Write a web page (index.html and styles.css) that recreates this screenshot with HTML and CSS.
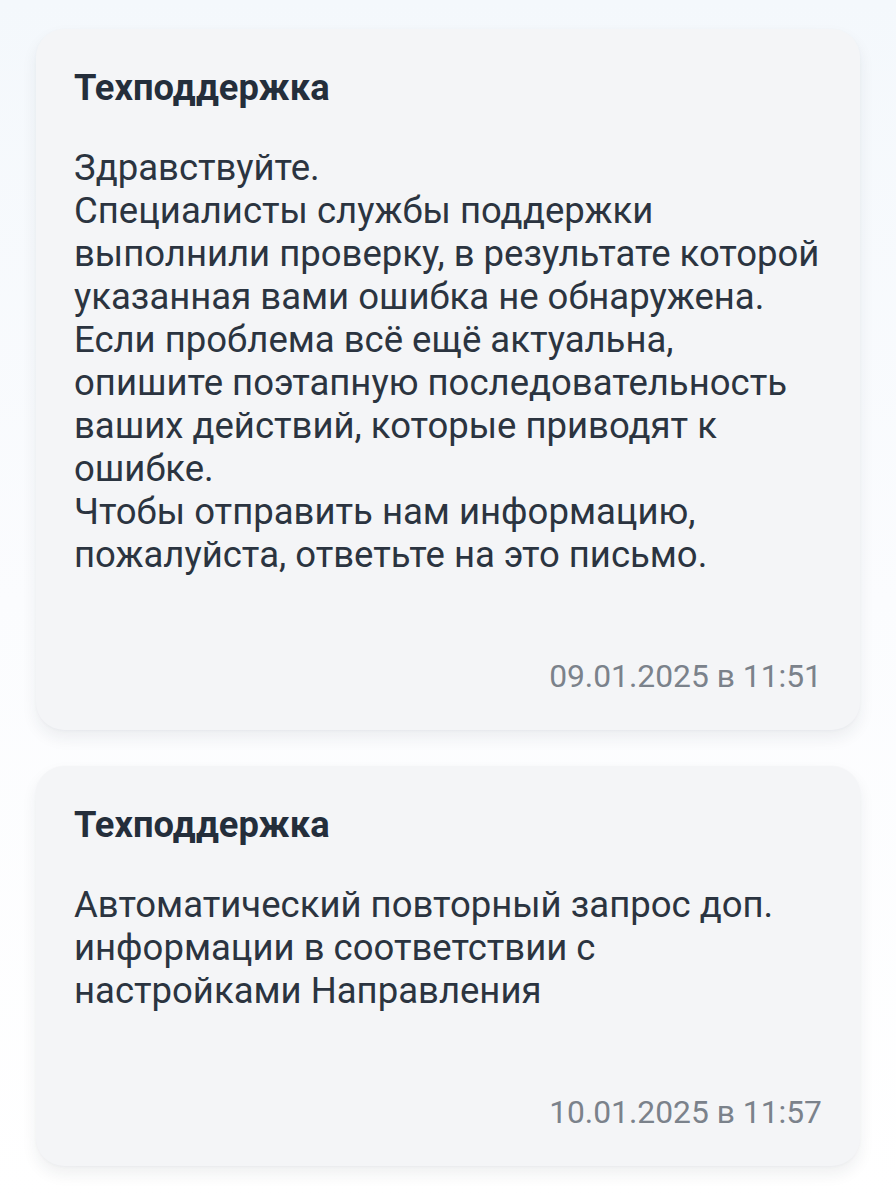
FILE: index.html
```html
<!DOCTYPE html>
<html lang="ru">
<head>
<meta charset="utf-8">
<link rel="stylesheet" href="styles.css">
</head>
<body>
<main class="feed">
  <article class="card">
    <h2 class="card-title">Техподдержка</h2>
    <p class="card-text">Здравствуйте.<br>Специалисты службы поддержки<br>выполнили проверку, в результате которой<br>указанная вами ошибка не обнаружена.<br>Если проблема всё ещё актуальна,<br>опишите поэтапную последовательность<br>ваших действий, которые приводят к<br>ошибке.<br>Чтобы отправить нам информацию,<br>пожалуйста, ответьте на это письмо.</p>
    <div class="card-time">09.01.2025 в 11:51</div>
  </article>
  <article class="card">
    <h2 class="card-title">Техподдержка</h2>
    <p class="card-text">Автоматический повторный запрос доп.<br>информации в соответствии с<br>настройками Направления</p>
    <div class="card-time">10.01.2025 в 11:57</div>
  </article>
</main>
</body>
</html>
```
FILE: styles.css
```css
html, body {
  margin: 0;
  padding: 0;
}
body {
  width: 896px;
  min-height: 1200px;
  background: linear-gradient(180deg, #f4f8fc 0%, #fbfcfe 50%, #ffffff 100%);
  font-family: Roboto, "Noto Sans", sans-serif;
}
.feed {
  display: flex;
  flex-direction: column;
  gap: 36px;
  padding: 29px 36px 0 36px;
}
.card {
  background: #f4f5f7;
  border-radius: 28px;
  padding: 37px 38px 32px 38px;
  box-shadow: 0 8px 16px rgba(30, 40, 60, 0.07), 0 1px 3px rgba(30, 40, 60, 0.03);
  display: flex;
  flex-direction: column;
}
.card-title {
  margin: 0;
  font-size: 36.3px;
  line-height: 43px;
  font-weight: 700;
  color: #242e3b;
}
.card-text {
  margin: 37px 0 0 0;
  font-size: 36.5px;
  line-height: 43px;
  font-weight: 400;
  color: #2b3440;
}
.card-time {
  margin-top: 79px;
  align-self: flex-end;
  font-size: 31.8px;
  line-height: 43px;
  color: #7b828b;
}
```
